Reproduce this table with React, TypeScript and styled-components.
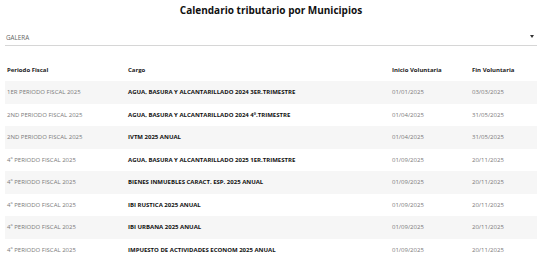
import styled, { createGlobalStyle } from "styled-components";

const ROWS = [
  { periodo: "1ER PERIODO FISCAL 2025", cargo: "AGUA, BASURA Y ALCANTARILLADO 2024 3ER.TRIMESTRE", inicio: "01/01/2025", fin: "03/03/2025" },
  { periodo: "2ND PERIODO FISCAL 2025", cargo: "AGUA, BASURA Y ALCANTARILLADO 2024 4º.TRIMESTRE", inicio: "01/04/2025", fin: "31/05/2025" },
  { periodo: "2ND PERIODO FISCAL 2025", cargo: "IVTM 2025 ANUAL", inicio: "01/04/2025", fin: "31/05/2025" },
  { periodo: "4º PERIODO FISCAL 2025", cargo: "AGUA, BASURA Y ALCANTARILLADO 2025 1ER.TRIMESTRE", inicio: "01/09/2025", fin: "20/11/2025" },
  { periodo: "4º PERIODO FISCAL 2025", cargo: "BIENES INMUEBLES CARACT. ESP. 2025 ANUAL", inicio: "01/09/2025", fin: "20/11/2025" },
  { periodo: "4º PERIODO FISCAL 2025", cargo: "IBI RUSTICA 2025 ANUAL", inicio: "01/09/2025", fin: "20/11/2025" },
  { periodo: "4º PERIODO FISCAL 2025", cargo: "IBI URBANA 2025 ANUAL", inicio: "01/09/2025", fin: "20/11/2025" },
  { periodo: "4º PERIODO FISCAL 2025", cargo: "IMPUESTO DE ACTIVIDADES ECONOM 2025 ANUAL", inicio: "01/09/2025", fin: "20/11/2025" },
];

function App() {
  return (
    <>
      <GlobalStyle />
      <Page>
        <Title>Calendario tributario por Municipios</Title>

        <Select>
          <SelectValue>GALERA</SelectValue>
          <Caret />
        </Select>

        <Table>
          <colgroup>
            <Col $width={121} />
            <col />
            <Col $width={80} />
            <Col $width={67} />
          </colgroup>
          <thead>
            <tr>
              <Th>Periodo Fiscal</Th>
              <Th>Cargo</Th>
              <Th>Inicio Voluntaria</Th>
              <Th>Fin Voluntaria</Th>
            </tr>
          </thead>
          <tbody>
            {ROWS.map((row, i) => (
              <Row key={i} $striped={i % 2 === 0}>
                <Td>{row.periodo}</Td>
                <Td $strong>{row.cargo}</Td>
                <Td>{row.inicio}</Td>
                <Td>{row.fin}</Td>
              </Row>
            ))}
          </tbody>
        </Table>
      </Page>
    </>
  );
}

export default App;

const GlobalStyle = createGlobalStyle`
  html, body {
    margin: 0;
    padding: 0;
    background: #ffffff;
  }

  body {
    font-family: "Open Sans", "Noto Sans", sans-serif;
    color: #222;
  }
`;

const Page = styled.div`
  display: flex;
  flex-direction: column;
  padding: 0 5px;
`;

const Title = styled.h1`
  margin: 0;
  padding-top: 3px;
  height: 19px;
  text-align: center;
  font-size: 10px;
  font-weight: 700;
  color: #111;
`;

const Select = styled.div`
  display: flex;
  align-items: center;
  justify-content: space-between;
  margin-top: 7px;
  height: 16px;
  padding: 0 3px 0 1px;
  border-bottom: 1px solid #d6d6d6;
`;

const SelectValue = styled.span`
  font-size: 6.3px;
  color: #666;
`;

const Caret = styled.span`
  width: 0;
  height: 0;
  margin-top: -2px;
  border-left: 2.5px solid transparent;
  border-right: 2.5px solid transparent;
  border-top: 3px solid #333;
`;

const Table = styled.table`
  width: 532px;
  margin-top: 13px;
  border-collapse: collapse;
  table-layout: fixed;
`;

const Col = styled.col<{ $width: number }>`
  width: ${(p) => p.$width}px;
`;

const Th = styled.th`
  height: 22px;
  padding: 0 2px;
  text-align: left;
  font-size: 6px;
  font-weight: 700;
  color: #222;
  vertical-align: middle;
`;

const Row = styled.tr<{ $striped: boolean }>`
  height: 22.5px;
  background: ${(p) => (p.$striped ? "#f6f6f6" : "#ffffff")};
`;

const Td = styled.td<{ $strong?: boolean }>`
  padding: 0 2px;
  font-size: 6px;
  white-space: nowrap;
  overflow: hidden;
  vertical-align: middle;
  font-weight: ${(p) => (p.$strong ? 700 : 400)};
  color: ${(p) => (p.$strong ? "#111" : "#7a7a7a")};
`;
